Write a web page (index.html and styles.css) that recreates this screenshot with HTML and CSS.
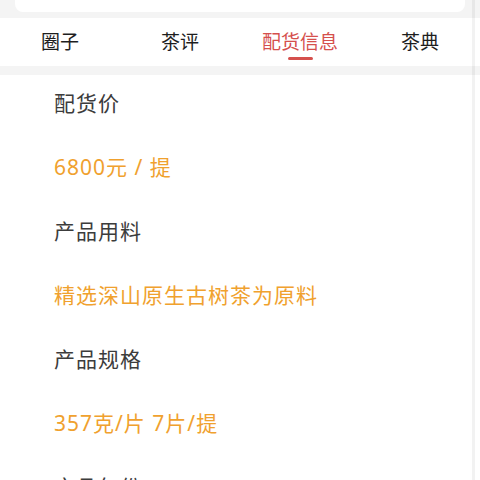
FILE: index.html
```html
<!DOCTYPE html>
<html lang="zh">
<head>
<meta charset="utf-8">
<link rel="stylesheet" href="styles.css">
</head>
<body>
<div class="page">
  <div class="top-card"></div>
  <nav class="tabs">
    <div class="tab">圈子</div>
    <div class="tab">茶评</div>
    <div class="tab active">配货信息</div>
    <div class="tab">茶典</div>
  </nav>
  <section class="content">
    <div class="row label">配货价</div>
    <div class="row value">6800元 / 提</div>
    <div class="row label">产品用料</div>
    <div class="row value">精选深山原生古树茶为原料</div>
    <div class="row label">产品规格</div>
    <div class="row value">357克/片 7片/提</div>
    <div class="row label">产品年份</div>
  </section>
  <div class="scrollbar"></div>
</div>
</body>
</html>
```

FILE: styles.css
```css
html, body {
  margin: 0;
  padding: 0;
  background: #f4f4f4;
  font-family: "Noto Sans", "Noto Sans CJK SC", sans-serif;
}
.page {
  position: relative;
  width: 480px;
  height: 480px;
  overflow: hidden;
  background: #f4f4f4;
}
.top-card {
  margin: 0 15px;
  height: 12px;
  background: #fff;
  border-radius: 0 0 8px 8px;
}
.tabs {
  margin-top: 6px;
  height: 48px;
  background: #fff;
  display: grid;
  grid-template-columns: repeat(4, 1fr);
}
.tab {
  position: relative;
  display: flex;
  justify-content: center;
  align-items: center;
  padding-bottom: 2px;
  box-sizing: border-box;
  font-size: 19px;
  color: #1e1e1e;
}
.tab.active {
  color: #d5504d;
}
.tab.active::after {
  content: "";
  position: absolute;
  left: 50%;
  top: 39px;
  width: 25px;
  height: 3px;
  margin-left: -12px;
  border-radius: 2px;
  background: #d5504d;
}
.content {
  margin-top: 9px;
  background: #fff;
  padding-left: 54px;
  height: 420px;
}
.row {
  height: 64px;
  line-height: 57px;
  font-size: 21px;
  letter-spacing: 1px;
  white-space: nowrap;
}
.label {
  color: #3c3c3c;
}
.value {
  color: #f0a12e;
}
.scrollbar {
  position: absolute;
  top: 0;
  left: 472px;
  width: 3px;
  height: 480px;
  background: rgba(0, 0, 0, 0.05);
}
```
